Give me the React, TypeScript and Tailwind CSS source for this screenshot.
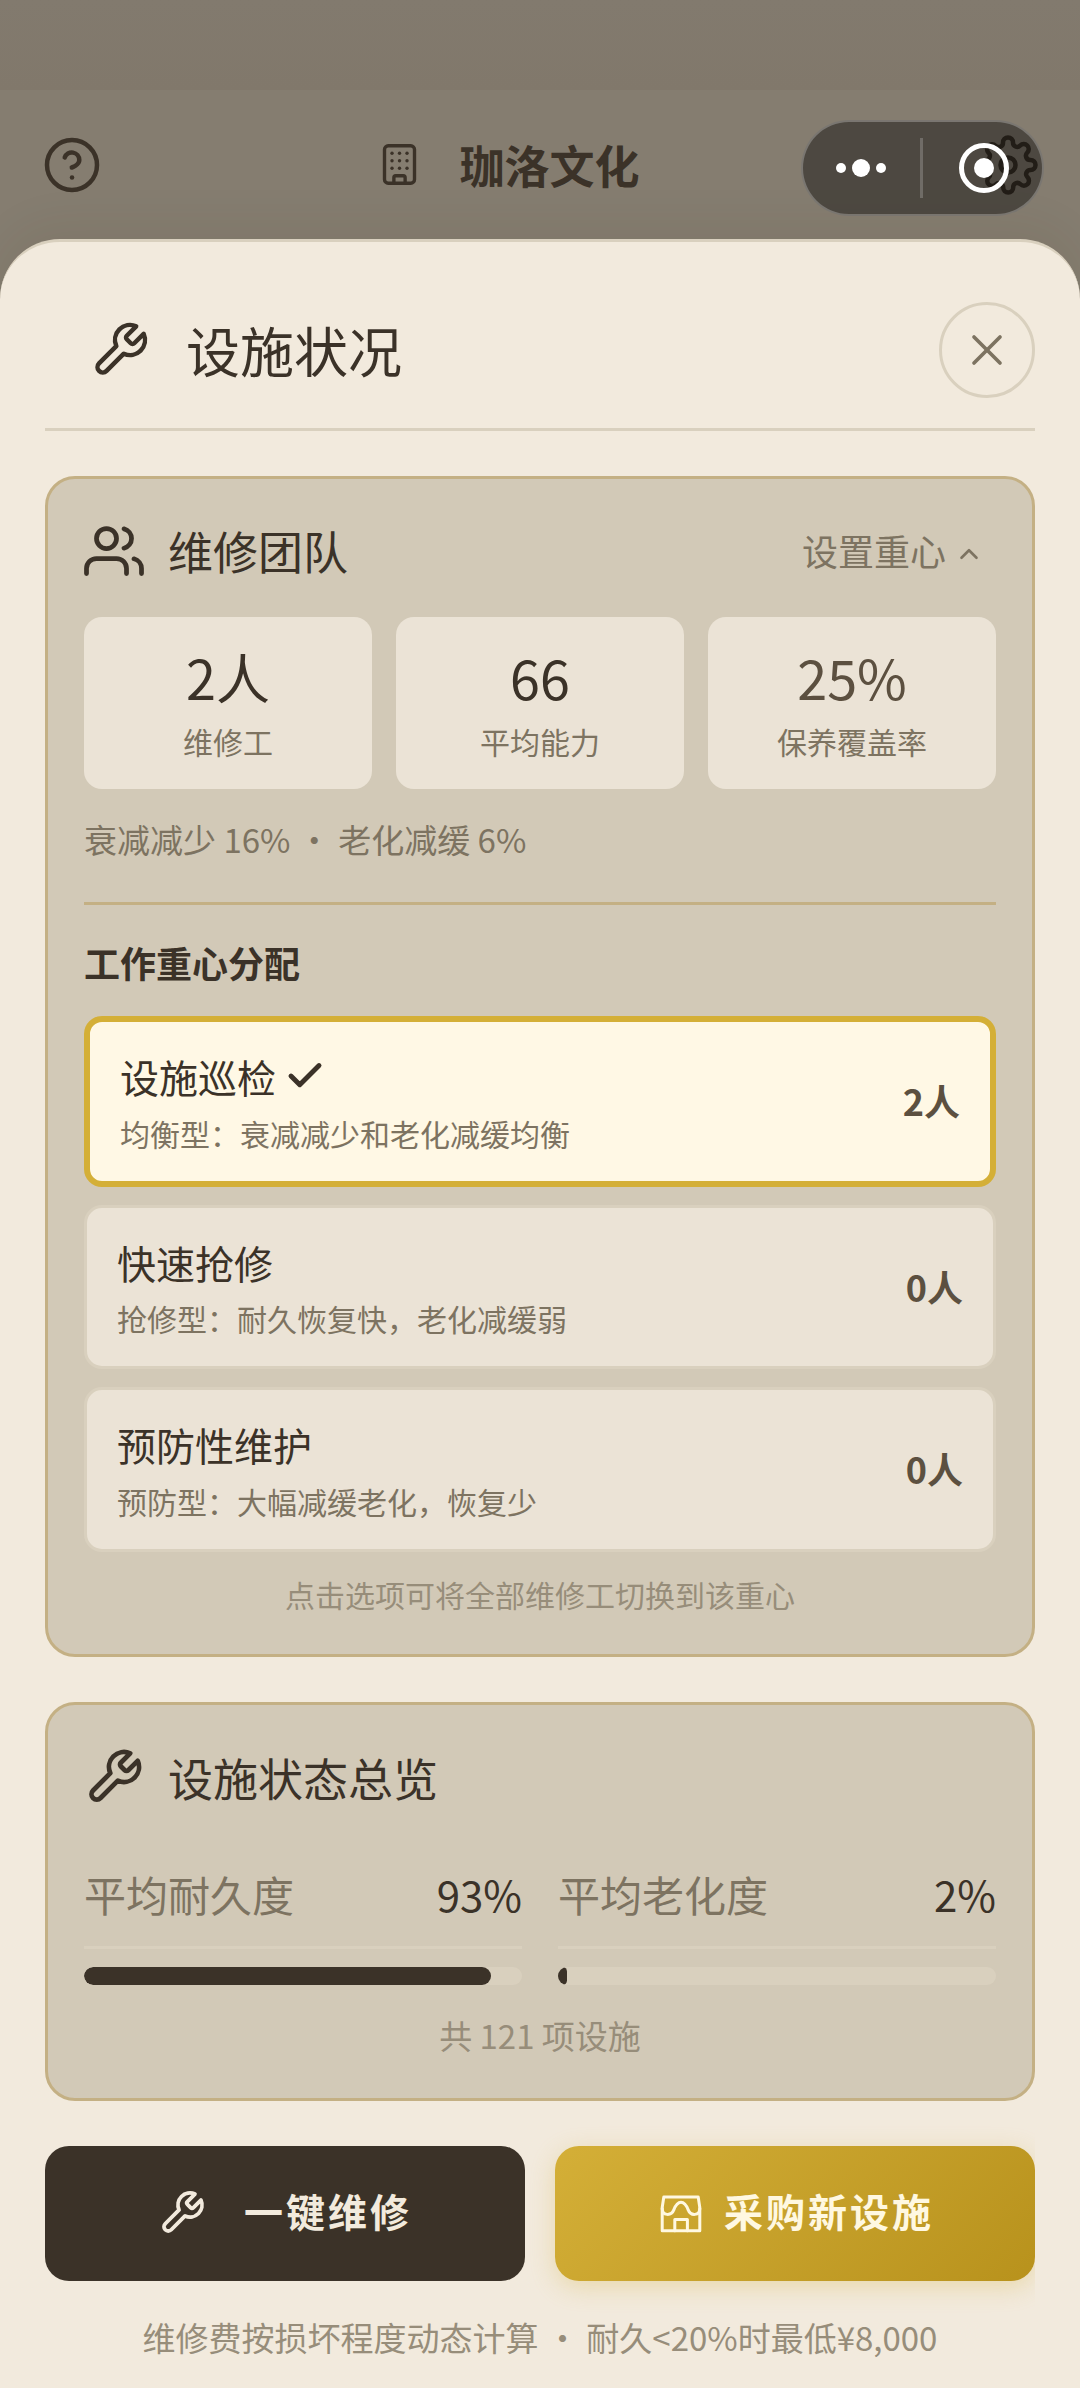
import type { ReactNode } from "react";
import { clsx } from "clsx";
import { FiHelpCircle, FiSettings, FiTool, FiUsers } from "react-icons/fi";
import { Building, Check, ChevronUp, X } from "lucide-react";

type Focus = {
  id: string;
  name: string;
  desc: string;
  count: number;
};

const TEAM_STATS = [
  { label: "维修工", value: "2人", color: "text-[#3b3228]" },
  { label: "平均能力", value: "66", color: "text-[#3b3228]" },
  { label: "保养覆盖率", value: "25%", color: "text-[#5c5040]" },
];

const FOCUS_LIST: Focus[] = [
  { id: "patrol", name: "设施巡检", desc: "均衡型：衰减减少和老化减缓均衡", count: 2 },
  { id: "rush", name: "快速抢修", desc: "抢修型：耐久恢复快，老化减缓弱", count: 0 },
  { id: "prevent", name: "预防性维护", desc: "预防型：大幅减缓老化，恢复少", count: 0 },
];

const METERS = [
  { label: "平均耐久度", value: 93 },
  { label: "平均老化度", value: 2 },
];

function StoreIcon() {
  return (
    <svg
      className="h-[48px] w-[48px] shrink-0"
      viewBox="0 0 48 48"
      fill="none"
      stroke="currentColor"
      strokeWidth="3"
      strokeLinejoin="round"
      strokeLinecap="round"
    >
      <path d="M6.2 17.5 7.8 7h34.4l1.6 10.5v23.3H6.2z" />
      <path d="M6.2 18.5c0 7.6 9.2 7.6 11.6 1.4 1.8-4.8 3.4-7.7 7.2-7.7s5.4 2.9 7.2 7.7c2.4 6.2 11.6 6.2 11.6-1.4" />
      <path d="M18.8 40.8V29.4h12.6v11.4" />
    </svg>
  );
}

/** 小程序右上角胶囊按钮，半透明地盖在设置图标上。 */
function Capsule() {
  return (
    <div className="absolute top-[120px] right-[36px] flex h-[96px] w-[243px] items-center rounded-full border-2 border-white/25 bg-black/42">
      <div className="flex flex-1 items-center justify-center gap-[6px]">
        <span className="h-[10px] w-[10px] rounded-full bg-white" />
        <span className="h-[18px] w-[18px] rounded-full bg-white" />
        <span className="h-[10px] w-[10px] rounded-full bg-white" />
      </div>
      <div className="h-[60px] w-[3px] bg-white/20" />
      <div className="flex flex-1 items-center justify-center pl-[3px]">
        <div className="flex h-[50px] w-[50px] items-center justify-center rounded-full border-[5px] border-white">
          <span className="h-[20px] w-[20px] rounded-full bg-white" />
        </div>
      </div>
    </div>
  );
}

function Panel({ className, children }: { className?: string; children: ReactNode }) {
  return (
    <section
      className={clsx(
        "rounded-[30px] border-[3px] border-[#c4b084] bg-[#d2c9b7] px-9 pt-9",
        className,
      )}
    >
      {children}
    </section>
  );
}

function FocusOption({ item, active }: { item: Focus; active: boolean }) {
  return (
    <button
      type="button"
      className={clsx(
        "flex items-center justify-between rounded-[18px] p-[30px] text-left",
        active
          ? "border-[6px] border-[#d4af37] bg-[#fff8e5]"
          : "border-[3px] border-[#d9d0be] bg-[#ebe3d6]",
      )}
    >
      <div>
        <div className="flex h-[48px] items-center gap-[8px] text-[39px] leading-[48px]">
          {item.name}
          {active && <Check size={42} strokeWidth={2.8} />}
        </div>
        <div className="mt-[14.5px] text-[30px] leading-[36px] text-[#7d7361]">{item.desc}</div>
      </div>
      <span className="-mt-[2px] text-[36px] leading-[48px] font-bold text-[#5c5040]">{item.count}人</span>
    </button>
  );
}

function Meter({ label, value }: { label: string; value: number }) {
  return (
    <div>
      <div className="flex h-[60px] items-center justify-between text-[42px] leading-[60px]">
        <span className="text-[#7d7361]">{label}</span>
        <span>{value}%</span>
      </div>
      <div className="mt-[22px] h-[3px] bg-[#d9d0be]" />
      <div className="mt-[18px] h-[18px] overflow-hidden rounded-full bg-[#d9d0be]">
        <div className="h-full rounded-[9px] bg-[#3b3228]" style={{ width: `${value}%` }} />
      </div>
    </div>
  );
}

export default function App() {
  const activeId = "patrol";

  return (
    <div className="relative flex h-[2388px] w-[1080px] flex-col overflow-hidden bg-[#857d70] font-['Noto_Sans_CJK_SC',sans-serif] text-[#3b3228]">
      <div className="h-[90px] bg-linear-to-b from-[#827a6e] to-[#81786b]" />
      <header className="flex h-[149px] items-center justify-between px-[42px]">
        <FiHelpCircle size={60} strokeWidth={1.8} />
        <div className="flex items-center gap-[37px] pr-[63px]">
          <Building size={45} strokeWidth={1.8} />
          <h1 className="text-[45px] leading-[60px] font-bold">珈洛文化</h1>
        </div>
        <FiSettings size={60} strokeWidth={1.8} />
      </header>

      <main className="relative flex flex-1 flex-col rounded-t-[60px] border-t-[3px] border-[#d9d0be] bg-[#f2eadd] px-[45px] pt-[60px] shadow-[0_-12px_48px_rgba(60,40,20,0.07)]">
        <div className="flex items-center justify-between border-b-[3px] border-[#d9d0be] pb-[30px]">
          <div className="flex items-center gap-9 pl-[45px]">
            <FiTool size={60} strokeWidth={1.8} />
            <h2 className="text-[54px] leading-[72px]">设施状况</h2>
          </div>
          <button
            type="button"
            className="flex h-[96px] w-[96px] items-center justify-center rounded-full border-[3px] border-[#d9d0be] text-[#7d7361]"
          >
            <X size={52} strokeWidth={1.7} />
          </button>
        </div>

        <Panel className="mt-[45px] pb-9">
          <div className="flex h-[72px] items-center justify-between">
            <div className="flex items-center gap-6">
              <FiUsers size={60} strokeWidth={1.9} />
              <h3 className="text-[45px] leading-[72px]">维修团队</h3>
            </div>
            <button
              type="button"
              className="-mt-[3px] flex items-center gap-[8px] pr-[12px] text-[36px] leading-[54px] text-[#7d7361]"
            >
              设置重心
              <ChevronUp size={30} strokeWidth={2.1} className="mt-[9px]" />
            </button>
          </div>

          <div className="mt-[30px] grid grid-cols-3 gap-6">
            {TEAM_STATS.map((s) => (
              <div
                key={s.label}
                className="flex h-[172px] flex-col items-center rounded-[18px] bg-[#ebe3d6] pt-[26px]"
              >
                <span className={clsx("text-[54px] leading-[68px]", s.color)}>{s.value}</span>
                <span className="mt-[12px] text-[30px] leading-[36px] text-[#7d7361]">{s.label}</span>
              </div>
            ))}
          </div>

          <p className="mt-[26px] text-[33px] leading-[48px] text-[#7d7361]">
            衰减减少 16% • 老化减缓 6%
          </p>

          <div className="mt-[39px] border-t-[3px] border-[#c4b084] pt-[30px]">
            <h4 className="text-[36px] leading-[54px] font-bold">工作重心分配</h4>
            <div className="mt-[27px] flex flex-col gap-[18px]">
              {FOCUS_LIST.map((item) => (
                <FocusOption key={item.id} item={item} active={item.id === activeId} />
              ))}
            </div>
            <p className="mt-[19.5px] text-center text-[30px] leading-[47px] text-[#978d7a]">
              点击选项可将全部维修工切换到该重心
            </p>
          </div>
        </Panel>

        <Panel className="mt-[45px] pb-[39px]">
          <div className="flex h-[72px] items-center gap-6">
            <FiTool size={60} strokeWidth={1.9} />
            <h3 className="pt-[2px] text-[45px] leading-[72px]">设施状态总览</h3>
          </div>
          <div className="mt-[51px] grid grid-cols-2 gap-9">
            {METERS.map((m) => (
              <Meter key={m.label} label={m.label} value={m.value} />
            ))}
          </div>
          <p className="mt-[26px] text-center text-[33px] leading-[48px] text-[#978d7a]">
            共 121 项设施
          </p>
        </Panel>

        <div className="mt-[45px] grid grid-cols-2 gap-[30px] text-[39px] leading-[54px] font-bold tracking-[3px] [clip-path:inset(-40px_0)]">
          <button
            type="button"
            className="flex h-[135px] items-center justify-center gap-[38px] rounded-3xl bg-[#3b3228] text-[#f2eadd]"
          >
            <FiTool size={48} strokeWidth={1.9} className="-mt-[2px]" />
            <span className="-mt-2">一键维修</span>
          </button>
          <button
            type="button"
            className="flex h-[135px] items-center justify-center gap-[20px] rounded-3xl bg-linear-135 from-[#d4af37] to-[#b8921c] text-[#fff8e1] shadow-[0_6px_24px_rgba(212,175,55,0.3)]"
          >
            <StoreIcon />
            <span className="-mt-2">采购新设施</span>
          </button>
        </div>

        <p className="mt-[32px] text-center text-[33px] leading-[48px] text-[#978d7a]">
          维修费按损坏程度动态计算 • 耐久&lt;20%时最低¥8,000
        </p>
      </main>

      <Capsule />
    </div>
  );
}
